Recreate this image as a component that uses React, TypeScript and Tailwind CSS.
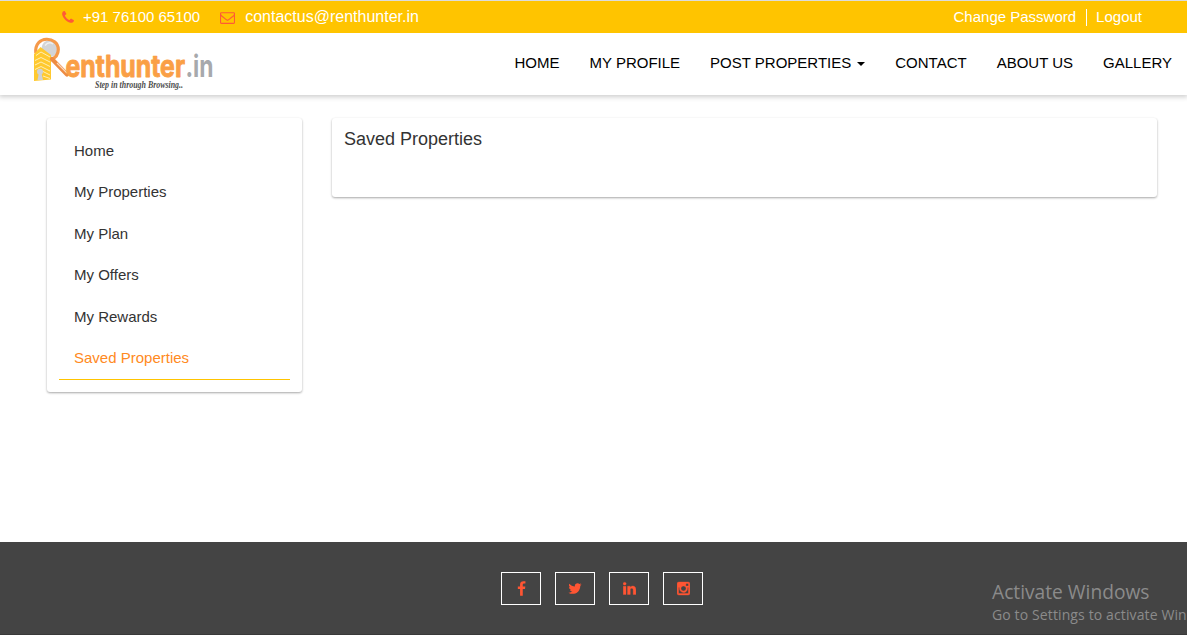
import React from "react";

type IconProps = { d: string; box: string; className: string };

function Icon({ d, box, className }: IconProps) {
  return (
    <svg viewBox={box} className={className} fill="currentColor" aria-hidden="true">
      <g transform="matrix(1 0 0 -1 0 1536)">
        <path d={d} />
      </g>
    </svg>
  );
}

const PHONE =
  "M1408 296q0 -27 -10 -70.500t-21 -68.500q-21 -50 -122 -106q-94 -51 -186 -51q-27 0 -53 3.500t-57.500 12.500t-47 14.500t-55.500 20.500t-49 18q-98 35 -175 83q-127 79 -264 216t-216 264q-48 77 -83 175q-3 9 -18 49t-20.500 55.500t-14.500 47t-12.500 57.500t-3.500 53q0 92 51 186 q56 101 106 122q25 11 68.500 21t70.500 10q14 0 21 -3q18 -6 53 -76q11 -19 30 -54t35 -63.500t31 -53.500q3 -4 17.500 -25t21.500 -35.500t7 -28.500q0 -20 -28.500 -50t-62 -55t-62 -53t-28.500 -46q0 -9 5 -22.500t8.500 -20.500t14 -24t11.500 -19q76 -137 174 -235t235 -174q2 -1 19 -11.500t24 -14t20.500 -8.500t22.500 -5q18 0 46 28.500t53 62t55 62t50 28.500q14 0 28.500 -7t35.500 -21.500t25 -17.500q25 -15 53.500 -31t63.500 -35t54 -30q70 -35 76 -53q3 -7 3 -21z";
const MAIL =
  "M1664 32v768q-32 -36 -69 -66q-268 -206 -426 -338q-51 -43 -83 -67t-86.500 -48.500t-102.500 -24.500h-1h-1q-48 0 -102.500 24.500t-86.500 48.500t-83 67q-158 132 -426 338q-37 30 -69 66v-768q0 -13 9.500 -22.500t22.500 -9.500h1472q13 0 22.500 9.500t9.500 22.500zM1664 1083v24.500t-.5 13 t-3 12.500t-5.500 9t-9 7.500t-14 2.500h-1472q-13 0 -22.500 -9.500t-9.500 -22.500q0 -168 147 -284q193 -152 401 -317q6 -5 35 -29.500t46 -37.500t44.500 -31.500t50.500 -27.500t43 -9h1h1q20 0 43 9t50.500 27.500t44.500 31.500t46 37.500t35 29.500q208 165 401 317q54 43 100.500 115.500t46.500 131.500z M1792 1120v-1088q0 -66 -47 -113t-113 -47h-1472q-66 0 -113 47t-47 113v1088q0 66 47 113t113 47h1472q66 0 113 -47t47 -113z";
const FACEBOOK =
  "M959 1524v-264h-157q-86 0 -116 -36t-30 -108v-189h293l-39 -296h-254v-759h-306v759h-255v296h255v218q0 186 104 288.500t277 102.500q147 0 228 -12z";
const TWITTER =
  "M1620 1128q-67 -98 -162 -167q1 -14 1 -42q0 -130 -38 -259.500t-115.500 -248.500t-184.500 -210.500t-258 -146t-323 -54.500q-271 0 -496 145q35 -4 78 -4q225 0 401 138q-105 2 -188 64.500t-114 159.500q33 -5 61 -5q43 0 85 11q-112 23 -185.500 111.500t-73.500 205.500v4q68 -38 146 -41 q-66 44 -105 115t-39 154q0 88 44 163q121 -149 294.500 -238.500t371.500 -99.500q-8 38 -8 74q0 134 94.500 228.500t228.500 94.500q140 0 236 -102q109 21 205 78q-37 -115 -142 -178q93 10 186 50z";
const LINKEDIN =
  "M349 911v-991h-330v991h330zM370 1217q1 -73 -50.500 -122t-135.500 -49h-2q-82 0 -132 49t-50 122q0 74 51.500 122.500t134.500 48.500t133 -48.500t51 -122.500zM1536 488v-568h-329v530q0 105 -40.500 164.500t-126.500 59.500q-63 0 -105.500 -34.500t-63.500 -85.500q-11 -30 -11 -81v-553h-329 q2 399 2 647t-1 296l-1 48h329v-144h-2q20 32 41 56t56.500 52t87 43.500t114.500 15.500q171 0 275 -113.500t104 -332.500z";
const INSTAGRAM =
  "M1362 110v648h-135q20 -63 20 -131q0 -126 -64 -232.500t-174 -168.500t-240 -62q-197 0 -337 135.500t-140 327.500q0 68 20 131h-141v-648q0 -26 17.500 -43.500t43.500 -17.500h1069q25 0 43 17.500t18 43.500zM1078 643q0 124 -90.500 211.500t-218.500 87.500q-127 0 -217.500 -87.500t-90.500 -211.500 t90.500 -211.500t217.500 -87.500q128 0 218.500 87.500t90.500 211.500zM1362 1003v165q0 28 -20 48.500t-49 20.500h-174q-29 0 -49 -20.500t-20 -48.500v-165q0 -29 20 -49t49 -20h174q29 0 49 20t20 49zM1536 1211v-1142q0 -81 -58 -139t-139 -58h-1142q-81 0 -139 58t-58 139v1142q0 81 58 139 t139 58h1142q81 0 139 -58t58 -139z";

function Logo() {
  return (
    <svg viewBox="0 0 184 62" className="h-[62px] w-[184px] overflow-visible" role="img" aria-label="Renthunter.in">
      <circle cx="18" cy="15.500" r="8.500" fill="#d3d4d6" />
      <path d="M3.800 20C2 1.500 26.300 3 26.300 16.500C26.300 22 23.500 25 18.500 27" fill="none" stroke="#f5994a" strokeWidth="3.200" />
      <path d="M13 12.500q4-4.500 8-1.500" fill="none" stroke="#f0f0f0" strokeWidth="1.400" />
      <path d="M2 21L8.500 14L19 22V46.500L2 48z" fill="#ffc92f" />
      <path
        d="M4 22.500l5-3.500 9 5M3 27.500l6-3 9 4.500M3 32l6-3 9 4.500M3 36.500l6-3 9 4.500M11 38.500l7 3.500M11 43l7 2.500"
        fill="none"
        stroke="#fff3c4"
        strokeWidth="0.900"
      />
      <circle cx="8" cy="38.800" r="3" fill="#cfd1d6" />
      <path d="M6.800 40.500h2.700l1.500 6.500H5.500z" fill="#cfd1d6" />
      <path d="M20 26L35 41.500" stroke="#ee8c42" strokeWidth="4.200" strokeLinecap="round" />
      <path d="M25 30L35 40" stroke="#fbd9bd" strokeWidth="1.200" />
      <text x="33.500" y="44.300" textLength="119.500" lengthAdjust="spacingAndGlyphs" className="font-[Inter,sans-serif] text-[30px] font-bold" fill="#fa9f45" stroke="#fa9f45" strokeWidth="0.900" strokeLinejoin="round">
        enthunter
      </text>
      <text x="153.500" y="44.300" textLength="28" lengthAdjust="spacingAndGlyphs" className="font-[Inter,sans-serif] text-[30px] font-bold" fill="#a7a9ac">
        .in
      </text>
      <text x="63" y="54.500" textLength="88" lengthAdjust="spacingAndGlyphs" className="font-['Liberation_Serif',serif] text-[9.5px] font-bold italic" fill="#4d4d4d">
        Step in through Browsing..
      </text>
    </svg>
  );
}

const menu = ["Home", "My Properties", "My Plan", "My Offers", "My Rewards"];

const socials = [
  { name: "Facebook", d: FACEBOOK, box: "0 0 1024 1792", className: "h-[16px] w-[9px]" },
  { name: "Twitter", d: TWITTER, box: "0 0 1664 1792", className: "h-[15px] w-[14px]" },
  { name: "LinkedIn", d: LINKEDIN, box: "0 0 1536 1792", className: "ml-px h-[15px] w-[13px] stroke-current stroke-[40]" },
  { name: "Instagram", d: INSTAGRAM, box: "0 0 1536 1792", className: "ml-px h-[15px] w-[13px] stroke-current stroke-[50]" },
];

export default function App() {
  return (
    <div className="flex h-[635px] w-[1187px] flex-col overflow-hidden bg-white font-['Liberation_Sans',Arial,sans-serif] text-[15px] leading-5 text-[#333]">
      <div className="z-20 flex h-[33px] shrink-0 items-center justify-between border-t border-[#dcdcdc] bg-[#ffc400] pr-[45px] pl-[62px] text-white">
        <div className="flex items-center">
          <Icon d={PHONE} box="0 0 1408 1792" className="h-[15px] w-[12px] text-[#ff5a36]" />
          <span className="ml-[9px]">+91 76100 65100</span>
          <Icon d={MAIL} box="0 0 1792 1792" className="ml-5 h-[15px] w-[15px] text-[#ff5a36]" />
          <span className="ml-[10px] text-base leading-5">contactus@renthunter.in</span>
        </div>
        <div className="flex items-center">
          <a className="mr-[10px]">Change Password</a>
          <a className="flex h-[17px] items-center border-l border-white pl-[9px]">Logout</a>
        </div>
      </div>

      <header className="z-10 flex h-[62px] shrink-0 justify-between bg-white pr-[15px] pl-[32px] text-black shadow-[0_1px_5px_1px_rgba(0,0,0,0.2)]">
        <Logo />
        <nav className="flex gap-[30px] pt-5">
          <a>HOME</a>
          <a>MY PROFILE</a>
          <a className="flex">
            POST PROPERTIES
            <span className="mt-[9px] ml-[6px] h-0 w-0 border-x-4 border-t-4 border-x-transparent border-t-black" />
          </a>
          <a>CONTACT</a>
          <a>ABOUT US</a>
          <a>GALLERY</a>
        </nav>
      </header>

      <main className="flex grow items-start gap-[30px] pt-[23px] pr-[30px] pl-[47px]">
        <aside className="h-[274px] w-[255px] rounded-[3px] bg-white px-3 pt-3 shadow-[0_1px_3px_rgba(0,0,0,0.12),0_1px_2px_rgba(0,0,0,0.24)]">
          <ul>
            {menu.map((label) => (
              <li key={label} className="flex h-[41.5px] items-center px-[15px]">
                {label}
              </li>
            ))}
            <li className="flex h-[42.5px] items-center border-b border-[#ffc400] px-[15px] text-[#ff8a22]">
              Saved Properties
            </li>
          </ul>
        </aside>
        <section className="h-[79px] grow rounded-[3px] bg-white px-3 pt-[11px] shadow-[0_1px_3px_rgba(0,0,0,0.12),0_1px_2px_rgba(0,0,0,0.24)]">
          <h1 className="text-[18px] leading-5">Saved Properties</h1>
        </section>
      </main>

      <footer className="relative flex h-[93px] shrink-0 justify-center gap-[14px] border-b border-[#393939] bg-[#444] pt-[30px] pl-[17px]">
        {socials.map((s) => (
          <a key={s.name} aria-label={s.name} className="flex h-[33px] w-[40px] items-center justify-center border border-white text-[#ff5533]">
            <Icon d={s.d} box={s.box} className={s.className} />
          </a>
        ))}
        <div className="absolute top-[38px] left-[992px] font-['Open_Sans',sans-serif] whitespace-nowrap text-[#8b8b8b]">
          <div className="text-[19.2px] leading-6">Activate Windows</div>
          <div className="mt-px text-[14px] leading-5 tracking-[0.12px]">Go to Settings to activate Windows.</div>
        </div>
      </footer>
    </div>
  );
}
